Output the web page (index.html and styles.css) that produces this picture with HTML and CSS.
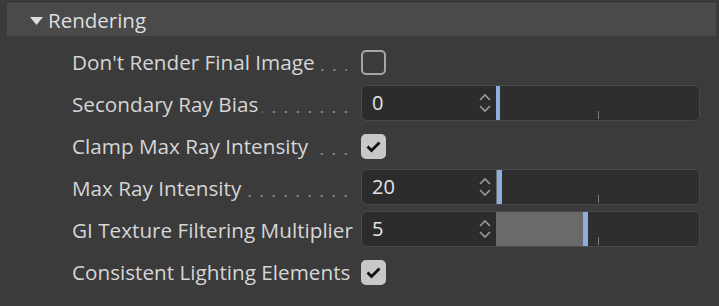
FILE: index.html
```html
<!DOCTYPE html>
<html>
<head>
<meta charset="utf-8">
<link rel="stylesheet" href="styles.css">
</head>
<body>
<div class="header">
  <svg class="tri" width="13" height="8" viewBox="0 0 13 8"><polygon points="0,0 13,0 6.5,8" fill="#dcdcdc"/></svg>
  <span class="title">Rendering</span>
</div>
<div class="rows">
  <div class="label"><span class="text">Don't Render Final Image</span><span class="leader"></span></div>
  <div class="ctrl"><span class="check"></span></div>

  <div class="label"><span class="text">Secondary Ray Bias</span><span class="leader"></span></div>
  <div class="ctrl">
    <div class="field">
      <div class="num"><span class="val">0</span>
        <svg class="spin" width="14" height="20" viewBox="0 0 14 20"><path d="M2 7 L7 2 L12 7 M2 13 L7 18 L12 13" fill="none" stroke="#9a9a9a" stroke-width="1.6"/></svg>
      </div>
      <div class="track"><div class="fill" style="width:0px"></div><div class="handle narrow"></div></div>
    </div>
  </div>

  <div class="label"><span class="text">Clamp Max Ray Intensity</span><span class="leader"></span></div>
  <div class="ctrl"><span class="check on"><svg width="25" height="25" viewBox="0 0 25 25"><path d="M6.5 12.5 L10.5 16.5 L18.5 8.5" fill="none" stroke="#111" stroke-width="2.8"/></svg></span></div>

  <div class="label"><span class="text">Max Ray Intensity</span><span class="leader"></span></div>
  <div class="ctrl">
    <div class="field">
      <div class="num"><span class="val">20</span>
        <svg class="spin" width="14" height="20" viewBox="0 0 14 20"><path d="M2 7 L7 2 L12 7 M2 13 L7 18 L12 13" fill="none" stroke="#9a9a9a" stroke-width="1.6"/></svg>
      </div>
      <div class="track"><div class="fill" style="width:1px"></div><div class="handle"></div></div>
    </div>
  </div>

  <div class="label"><span class="text">GI Texture Filtering Multiplier</span><span class="leader"></span></div>
  <div class="ctrl">
    <div class="field">
      <div class="num"><span class="val">5</span>
        <svg class="spin" width="14" height="20" viewBox="0 0 14 20"><path d="M2 7 L7 2 L12 7 M2 13 L7 18 L12 13" fill="none" stroke="#9a9a9a" stroke-width="1.6"/></svg>
      </div>
      <div class="track"><div class="fill" style="width:87px"></div><div class="handle"></div></div>
    </div>
  </div>

  <div class="label"><span class="text">Consistent Lighting Elements</span><span class="leader"></span></div>
  <div class="ctrl"><span class="check on"><svg width="25" height="25" viewBox="0 0 25 25"><path d="M6.5 12.5 L10.5 16.5 L18.5 8.5" fill="none" stroke="#111" stroke-width="2.8"/></svg></span></div>
</div>
</body>
</html>
```

FILE: styles.css
```css
html, body {
  margin: 0;
  padding: 0;
  background: #3b3b3b;
}
body {
  width: 719px;
  height: 306px;
  overflow: hidden;
  font-family: "Open Sans", "Noto Sans", sans-serif;
  font-size: 20.7px;
  color: #d6d6d6;
}
.header {
  margin: 3px 3px 0 7px;
  height: 33px;
  background: #4a4a4a;
  border-top: 1px solid #525252;
  box-sizing: border-box;
  display: flex;
  align-items: center;
  padding-left: 23px;
}
.tri {
  margin-right: 5px;
  margin-top: 1px;
}
.title {
  color: #dedede;
  font-size: 20.5px;
}
.rows {
  display: grid;
  grid-template-columns: 289px 339px;
  grid-auto-rows: 42px;
  padding: 5px 0 0 72px;
}
.label {
  display: flex;
  align-items: center;
  white-space: nowrap;
  min-width: 0;
}
.leader {
  flex: 1;
  height: 2px;
  margin: 15px 14px 0 4px;
  background-image: linear-gradient(to left, #8a8a8a 2px, transparent 2px);
  background-size: 12px 2px;
  background-position: right top;
  background-repeat: repeat-x;
}
.ctrl {
  display: flex;
  align-items: center;
}
.check {
  width: 25px;
  height: 25px;
  box-sizing: border-box;
  border: 2px solid #a6a6a6;
  border-radius: 5px;
  display: flex;
  align-items: center;
  justify-content: center;
}
.check.on {
  background: #c8c8c8;
  border-color: #c8c8c8;
}
.check svg {
  flex: none;
}
.field {
  width: 339px;
  height: 36px;
  box-sizing: border-box;
  border: 1px solid #4a4a4a;
  border-radius: 6px;
  background: #2c2c2c;
  display: flex;
  overflow: hidden;
  margin-top: -3px;
}
.num {
  width: 134px;
  display: flex;
  align-items: center;
  padding-left: 10px;
  padding-right: 4px;
  box-sizing: border-box;
}
.val {
  flex: 1;
  color: #e4e4e4;
  font-size: 20px;
}
.spin {
  display: block;
}
.track {
  flex: 1;
  display: flex;
  position: relative;
  background: #2e2e2e;
}
.fill {
  background: #6a6a6a;
}
.handle {
  width: 5px;
  background: #8eaee0;
}
.handle.narrow {
  width: 4px;
}
.track::after {
  content: "";
  position: absolute;
  left: 102px;
  bottom: 1px;
  width: 1px;
  height: 8px;
  background: #7a7a7a;
}
```
